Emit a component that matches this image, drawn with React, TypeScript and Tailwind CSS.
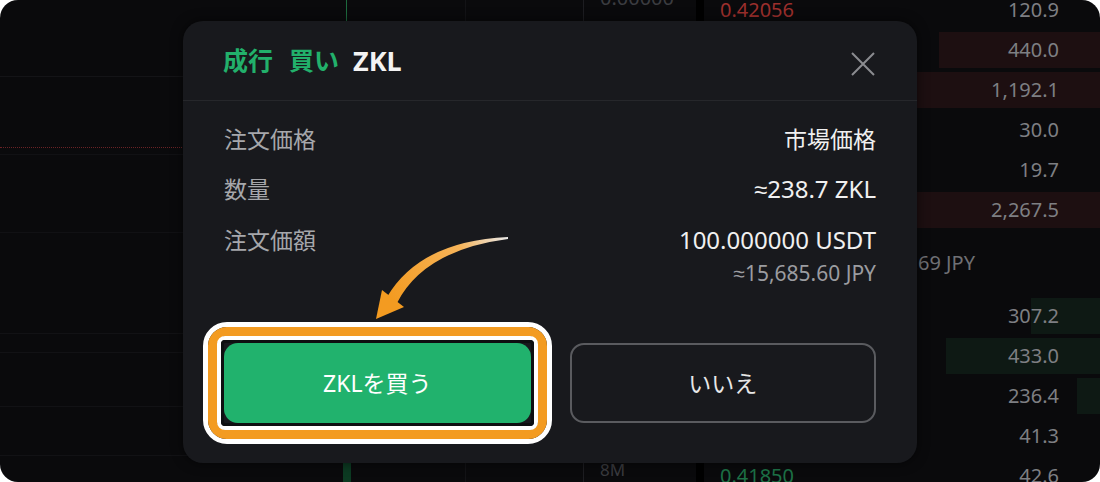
const asks = [
  { price: "0.42056", size: "120.9", depth: 0 },
  { price: "0.42045", size: "440.0", depth: 161 },
  { price: "0.42030", size: "1,192.1", depth: 262 },
  { price: "0.42018", size: "30.0", depth: 0 },
  { price: "0.42004", size: "19.7", depth: 0 },
  { price: "0.41990", size: "2,267.5", depth: 300 },
];

const bids = [
  { price: "0.41920", size: "307.2", depth: 69 },
  { price: "0.41905", size: "433.0", depth: 154 },
  { price: "0.41890", size: "236.4", depth: 23 },
  { price: "0.41870", size: "41.3", depth: 0 },
  { price: "0.41850", size: "42.6", depth: 0 },
];

// narrow "≈" (Noto Sans lacks it, CJK fallback is full width)
function Approx() {
  return <span className="font-['Liberation_Sans',sans-serif]">≈</span>;
}

function BookRow({
  price,
  size,
  depth,
  side,
}: {
  price: string;
  size: string;
  depth: number;
  side: "ask" | "bid";
}) {
  return (
    <div className="relative flex h-[40px] shrink-0 items-center justify-between pl-[16px] pr-[41px] text-[20px]">
      {depth > 0 && (
        <div
          className={
            side === "ask"
              ? "absolute right-0 top-[2px] bottom-[2px] bg-[#1d0f11]"
              : "absolute right-0 top-[2px] bottom-[2px] bg-[#0e1914]"
          }
          style={{ width: depth }}
        />
      )}
      <span
        className={
          side === "ask"
            ? "relative text-[#9c2f2c]"
            : "relative text-[#1d7146]"
        }
      >
        {price}
      </span>
      <span className="relative text-[#7e7f83]">{size}</span>
    </div>
  );
}

function Backdrop() {
  return (
    <div className="flex h-full">
      {/* chart */}
      <div className="flex w-[346px] shrink-0 flex-col">
        <div className="h-[77px] border-b border-[#141417]" />
        <div className="h-[71px] border-b border-dotted border-[#6a2225]" />
        <div className="h-[7px] border-b border-[#111114]" />
        <div className="h-[78px] border-b border-[#111114]" />
        <div className="h-[101px] border-b border-[#121215]" />
        <div className="h-[19px] border-b border-[#121215]" />
        <div className="h-[54px] border-b border-[#121215]" />
        <div className="h-[49px] border-b border-[#121215]" />
        <div className="flex-1" />
      </div>

      {/* candles */}
      <div className="flex w-[120px] shrink-0 flex-col justify-between border-r border-[#131316]">
        <div className="h-[21px] w-px bg-[#1d6a3e]" />
        <div className="-ml-[3px] h-[20px] w-[8px] bg-[#0c3a22]" />
      </div>

      <div className="w-[118px] shrink-0 border-r border-[#1d1d21]" />

      {/* volume */}
      <div className="flex w-[112px] shrink-0 flex-col justify-between pl-[16px]">
        <span className="-mt-[17px] text-[20px] text-[#3b3c40]">0.00000</span>
        <span className="mb-[4px] text-[17px] leading-none text-[#3a3b3f]">
          8M
        </span>
      </div>

      <div className="w-[8px] shrink-0 bg-black" />

      {/* order book */}
      <div className="flex flex-1 flex-col">
        <div className="-mt-[10px] flex flex-col">
          {asks.map((r) => (
            <BookRow key={r.price} {...r} side="ask" />
          ))}
        </div>
        <div className="flex h-[66px] shrink-0 items-center justify-between pl-[16px] pr-[125px] text-[20px]">
          <span className="text-[#2a8a58]">0.41956</span>
          <span className="text-[#6f7074]">
            <Approx />
            65.69 JPY
          </span>
        </div>
        <div className="flex flex-col">
          {bids.map((r) => (
            <BookRow key={r.price} {...r} side="bid" />
          ))}
        </div>
      </div>
    </div>
  );
}

function ConfirmModal() {
  return (
    <div className="absolute left-[183px] top-[21px] flex h-[442px] w-[734px] flex-col rounded-[20px] bg-[#18191d] shadow-[0_0_12px_rgba(0,0,0,0.6)]">
      <div className="flex h-[80px] shrink-0 items-center justify-between border-b border-[#26272b] pl-[40px] pr-[42px]">
        <div className="flex items-center font-bold leading-none">
          <span className="text-[25px] text-[#22b06b]">成行</span>
          <span className="ml-[16px] text-[25px] text-[#22b06b]">買い</span>
          <span className="ml-[14px] text-[27px] text-[#f3f3f3]">ZKL</span>
        </div>
        <svg
          width="24"
          height="24"
          viewBox="0 0 24 24"
          className="mt-[6px]"
          fill="none"
          stroke="#8b8c90"
          strokeWidth="2"
        >
          <path d="M1 1 23 23M23 1 1 23" />
        </svg>
      </div>

      <div className="flex flex-col gap-[18px] px-[41px] pt-[22px] text-[23px] leading-[32px]">
        <div className="flex justify-between">
          <span className="text-[#a6a7ab]">注文価格</span>
          <span className="text-[#f0f0f0]">市場価格</span>
        </div>
        <div className="flex justify-between">
          <span className="text-[#a6a7ab]">数量</span>
          <span className="text-[24px] text-[#f0f0f0]">
            <Approx />
            238.7 ZKL
          </span>
        </div>
        <div className="flex justify-between">
          <span className="text-[#a6a7ab]">注文価額</span>
          <div className="flex flex-col items-end">
            <span className="text-[24px] text-[#f0f0f0]">100.000000 USDT</span>
            <span className="mt-[3px] text-[21px] leading-[28px] text-[#9b9ca0]">
              <Approx />
              15,685.60 JPY
            </span>
          </div>
        </div>
      </div>

      <div className="mt-auto grid grid-cols-2 gap-[39px] px-[41px] pb-[40px]">
        <div className="relative">
          <button className="flex h-[80px] w-full items-center justify-center rounded-[14px] bg-[#21b26d] text-[23px] text-white">
            ZKLを買う
          </button>
          <div className="pointer-events-none absolute -inset-[21px] rounded-[24px] border-[5px] border-white">
            <div className="h-full w-full rounded-[19px] border-[9px] border-[#f39b21]">
              <div className="h-full w-full rounded-[8px] border-[4px] border-white">
                <div className="h-full w-full rounded-[4px] border-[3px] border-[#0e0f11]" />
              </div>
            </div>
          </div>
        </div>
        <button className="flex h-[80px] items-center justify-center rounded-[14px] border-2 border-[#5a5b5f] text-[23px] text-[#e8e8e8]">
          いいえ
        </button>
      </div>
    </div>
  );
}

export default function App() {
  return (
    <div className="h-[482px] w-[1100px] bg-white font-['Noto_Sans','Noto_Sans_CJK_JP',sans-serif]">
      <div className="relative h-full overflow-hidden rounded-[18px] bg-[#0a0a0c]">
        <Backdrop />
        <ConfirmModal />
        <svg
          className="pointer-events-none absolute left-0 top-0"
          width="1100"
          height="482"
        >
          <defs>
            <linearGradient
              id="arrowFade"
              gradientUnits="userSpaceOnUse"
              x1="508"
              y1="237"
              x2="392"
              y2="300"
            >
              <stop offset="0" stopColor="#ffffff" stopOpacity="0.9" />
              <stop offset="0.35" stopColor="#f6b45a" />
              <stop offset="1" stopColor="#f39b21" />
            </linearGradient>
          </defs>
          <path
            d="M508 237 Q420 241 387 297 L397 303 Q424 250 508 239 Z"
            fill="url(#arrowFade)"
          />
          <path d="M382 290 L404 307 L376 319 Z" fill="#f39b21" />
        </svg>
      </div>
    </div>
  );
}
